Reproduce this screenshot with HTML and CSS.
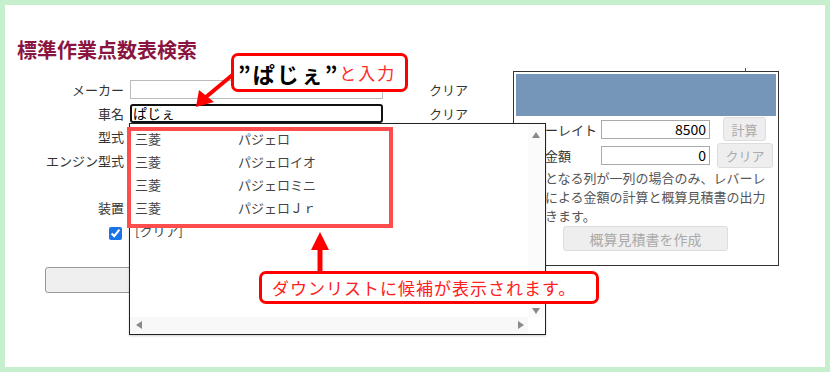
FILE: index.html
```html
<!DOCTYPE html>
<html>

<head>
  <title>標準作業点数表検索</title>
  <meta charset="utf-8" />
  <link rel="stylesheet" href="styles.css">
</head>

<body>
  <div class="frame">
    <h1 class="title">標準作業点数表検索</h1>

    <div class="form">
      <label class="lbl">メーカー</label>
      <input class="field" type="text" />
      <span class="clear">クリア</span>

      <label class="lbl">車名</label>
      <input class="field focused" type="text" value="ぱじぇ" />
      <span class="clear">クリア</span>

      <label class="lbl">型式</label>
      <input class="field" type="text" />
      <span class="clear">クリア</span>

      <label class="lbl">エンジン型式</label>
      <input class="field" type="text" />
      <span class="clear">クリア</span>

      <span class="lbl"></span>
      <span></span>
      <span></span>

      <label class="lbl">装置</label>
      <input class="field" type="text" />
      <span class="clear">クリア</span>

      <span class="lbl"><input class="check" type="checkbox" checked /></span>
      <span></span>
      <span></span>
    </div>
    <button class="search"></button>

    <div class="panel">
      <div class="panel-head"></div>
      <div class="panel-row">
        <span class="panel-lbl">レバーレイト</span>
        <input class="num" type="text" value="8500" />
        <button class="btn btn-calc" disabled>計算</button>
      </div>
      <div class="panel-row">
        <span class="panel-lbl">概算金額</span>
        <input class="num" type="text" value="0" />
        <button class="btn btn-clear" disabled>クリア</button>
      </div>
      <p class="panel-note">対象となる列が一列の場合のみ、レバーレ<br>ートによる金額の計算と概算見積書の出力<br>ができます。</p>
      <button class="btn btn-make" disabled>概算見積書を作成</button>
    </div>
    <i class="tick"></i>

    <div class="suggest">
      <ul class="suggest-list">
        <li><span class="maker">三菱</span><span>パジェロ</span></li>
        <li><span class="maker">三菱</span><span>パジェロイオ</span></li>
        <li><span class="maker">三菱</span><span>パジェロミニ</span></li>
        <li><span class="maker">三菱</span><span>パジェロＪｒ</span></li>
        <li><span class="maker">[クリア]</span></li>
      </ul>
      <div class="vbar"><i class="tri up"></i><i class="tri down"></i></div>
      <div class="hbar"><i class="tri left"></i><i class="tri right"></i></div>
    </div>

    <div class="highlight"></div>

    <svg class="arrows" width="830" height="372" viewBox="0 0 830 372">
      <line x1="236" y1="72" x2="206" y2="97" stroke="#ff0000" stroke-width="4" />
      <polygon points="196,107 199,90 214,102" fill="#ff0000" />
      <line x1="320" y1="246" x2="320" y2="272" stroke="#ff0000" stroke-width="5" />
      <polygon points="320,232 311,250 329,250" fill="#ff0000" />
    </svg>

    <div class="note note-input"><b>”ぱじぇ”</b><span>と入力</span></div>
    <div class="note note-list">ダウンリストに候補が表示されます。</div>
  </div>
</body>

</html>
```

FILE: styles.css
```css
body {
  margin: 0;
  padding: 0;
  font-family: 'Noto Sans CJK JP', 'Noto Sans', sans-serif;
  background: #fff;
}
.frame {
  position: relative;
  box-sizing: border-box;
  width: 830px;
  height: 372px;
  border: 5px solid #c6efce;
  overflow: hidden;
  padding: 0 7px;
}
.title {
  margin: 33px 0 0 5px;
  font-size: 20px;
  line-height: 24px;
  font-weight: bold;
  color: #8a1540;
}
.form {
  display: grid;
  grid-template-columns: 112px 253px auto;
  grid-auto-rows: 23.6px;
  column-gap: 6px;
  align-items: center;
  margin-top: 16px;
  font-size: 13px;
  color: #333;
}
.lbl {
  text-align: right;
  white-space: nowrap;
}
.field {
  box-sizing: border-box;
  width: 253px;
  height: 19px;
  border: 1px solid #bbb;
  padding: 0 3px;
  font-family: inherit;
  font-size: 14px;
  color: #000;
}
.field.focused {
  border: 2px solid #111;
  border-radius: 3px;
  padding: 0 1px;
  line-height: 15px;
}
.clear {
  padding-left: 40px;
  color: #333;
}
.check {
  width: 13px;
  height: 13px;
  margin: 0 2px 0 0;
  vertical-align: middle;
  accent-color: #1a73e8;
}
.search {
  display: block;
  box-sizing: border-box;
  width: 260px;
  height: 26px;
  margin: 24px 0 0 33px;
  border: 1px solid #999;
  border-radius: 3px;
  background: #efefef;
  font-family: inherit;
}
.panel {
  position: absolute;
  left: 508px;
  top: 66px;
  box-sizing: border-box;
  width: 266px;
  height: 195px;
  border: 1px solid #333;
  padding: 2px;
  background: #fff;
  font-size: 13px;
}
.tick {
  position: absolute;
  left: 740px;
  top: 63px;
  width: 1px;
  height: 3px;
  background: #555;
}
.panel-head {
  height: 42px;
  background: #7596b8;
}
.panel-row {
  display: flex;
  align-items: center;
  height: 26px;
  padding-left: 3px;
  color: #333;
}
.panel-lbl {
  width: 82px;
  white-space: nowrap;
}
.num {
  box-sizing: border-box;
  width: 109px;
  height: 19px;
  border: 1px solid #aaa;
  text-align: right;
  padding: 0 3px;
  font-family: inherit;
  font-size: 14px;
  color: #000;
}
.btn {
  box-sizing: border-box;
  border: 1px solid #ddd;
  border-radius: 3px;
  background: #eee;
  color: #aaa;
  font-family: inherit;
  font-size: 13px;
  padding: 0;
}
.btn-calc {
  width: 43px;
  height: 24px;
  margin-left: 13px;
}
.btn-clear {
  width: 56px;
  height: 25px;
  margin-left: 7px;
}
.panel-note {
  margin: 0;
  padding-left: 3px;
  line-height: 19px;
  color: #555;
  white-space: nowrap;
}
.btn-make {
  display: block;
  width: 165px;
  height: 25px;
  margin: 1px 0 0 47px;
  font-size: 14px;
}
.suggest {
  position: absolute;
  left: 124px;
  top: 118px;
  box-sizing: border-box;
  width: 417px;
  height: 212px;
  border: 1px solid #222;
  background: #fff;
  box-shadow: 0 1px 2px rgba(0, 0, 0, 0.2);
}
.suggest-list {
  list-style: none;
  margin: 0;
  padding: 3px 0 0 5px;
  font-size: 13px;
  color: #444;
}
.suggest-list li {
  display: flex;
  height: 23px;
  align-items: center;
}
.maker {
  width: 103px;
}
.vbar {
  position: absolute;
  right: 0;
  top: 0;
  width: 17px;
  bottom: 17px;
  background: #fbfbfb;
}
.hbar {
  position: absolute;
  left: 0;
  right: 17px;
  bottom: 0;
  height: 17px;
  background: #f8f8f8;
}
.tri {
  position: absolute;
  width: 0;
  height: 0;
  border: 4px solid transparent;
}
.tri.up {
  top: 8px;
  left: 4px;
  border-bottom: 6px solid #8a8a8a;
  border-top-width: 0;
}
.tri.down {
  bottom: 3px;
  left: 4px;
  border-top: 6px solid #8a8a8a;
  border-bottom-width: 0;
}
.tri.left {
  left: 6px;
  top: 4px;
  border-right: 6px solid #8a8a8a;
  border-left-width: 0;
}
.tri.right {
  right: 4px;
  top: 4px;
  border-left: 6px solid #8a8a8a;
  border-right-width: 0;
}
.highlight {
  position: absolute;
  left: 122px;
  top: 122px;
  box-sizing: border-box;
  width: 266px;
  height: 101px;
  border: 4px solid #ff4d4d;
}
.arrows {
  position: absolute;
  left: -5px;
  top: -5px;
}
.note {
  position: absolute;
  box-sizing: border-box;
  display: flex;
  align-items: center;
  border: 3px solid #ff0000;
  border-radius: 7px;
  background: #fff;
  white-space: nowrap;
}
.note-input {
  left: 226px;
  top: 48px;
  width: 177px;
  height: 39px;
  padding-left: 4px;
}
.note-input b {
  font-size: 22px;
  letter-spacing: 2px;
  color: #000;
}
.note-input span {
  font-size: 17px;
  letter-spacing: 2px;
  color: #ff2a2a;
}
.note-list {
  left: 254px;
  top: 266px;
  width: 340px;
  height: 33px;
  padding-left: 10px;
  font-size: 17px;
  letter-spacing: 1px;
  color: #ff2020;
}
```
